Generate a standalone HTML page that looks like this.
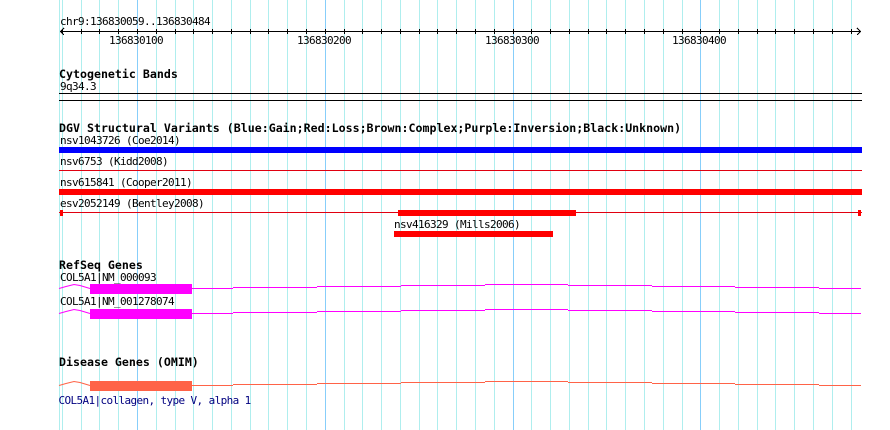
<!DOCTYPE html>
<html>
<head>
<meta charset="utf-8">
<style>
html,body{margin:0;padding:0;background:#fff;width:890px;height:430px;overflow:hidden}
svg{display:block}
text{font-family:"DejaVu Sans Mono","Liberation Mono",monospace;font-size:11px;letter-spacing:-0.62px;fill:#000;white-space:pre;text-rendering:optimizeSpeed}
.t{font-weight:bold;font-size:11.6px;letter-spacing:0.01px}
.c line,.c rect,.c polyline,.c path{shape-rendering:crispEdges}
</style>
</head>
<body>
<svg width="890" height="430" viewBox="0 0 890 430" xmlns="http://www.w3.org/2000/svg">
<g class="c">
<path fill="none" stroke="#afeeee" stroke-width="1" d="M59.5 0V430M62.5 0V430M81.5 0V430M99.5 0V430M118.5 0V430M156.5 0V430M175.5 0V430M193.5 0V430M212.5 0V430M231.5 0V430M250.5 0V430M268.5 0V430M287.5 0V430M306.5 0V430M344.5 0V430M362.5 0V430M381.5 0V430M400.5 0V430M419.5 0V430M437.5 0V430M456.5 0V430M475.5 0V430M494.5 0V430M531.5 0V430M550.5 0V430M569.5 0V430M588.5 0V430M606.5 0V430M625.5 0V430M644.5 0V430M663.5 0V430M682.5 0V430M719.5 0V430M738.5 0V430M757.5 0V430M775.5 0V430M794.5 0V430M813.5 0V430M832.5 0V430M851.5 0V430"/>
<path fill="none" stroke="#87cefa" stroke-width="1" d="M137.5 0V430M325.5 0V430M513.5 0V430M700.5 0V430"/>
<path fill="none" stroke="#000" stroke-width="1" d="M60 31.5H861M62.5 29V34M81.5 29V34M99.5 29V34M118.5 29V34M137.5 29V34M156.5 29V34M175.5 29V34M193.5 29V34M212.5 29V34M231.5 29V34M250.5 29V34M268.5 29V34M287.5 29V34M306.5 29V34M325.5 29V34M344.5 29V34M362.5 29V34M381.5 29V34M400.5 29V34M419.5 29V34M437.5 29V34M456.5 29V34M475.5 29V34M494.5 29V34M513.5 29V34M531.5 29V34M550.5 29V34M569.5 29V34M588.5 29V34M606.5 29V34M625.5 29V34M644.5 29V34M663.5 29V34M682.5 29V34M700.5 29V34M719.5 29V34M738.5 29V34M757.5 29V34M775.5 29V34M794.5 29V34M813.5 29V34M832.5 29V34M851.5 29V34"/>
<path fill="none" stroke="#000" stroke-width="1" d="M59 93.5H862M59 100.5H862"/>
<rect x="59" y="147" width="803" height="6" fill="#0000ff"/>
<rect x="59" y="170" width="803" height="1" fill="#e00010"/>
<rect x="59" y="189" width="803" height="6" fill="#ff0000"/>
<rect x="59" y="212" width="803" height="1" fill="#e00010"/>
<rect x="60" y="210" width="3" height="6" fill="#ff0000"/>
<rect x="858" y="210" width="3" height="6" fill="#ff0000"/>
<rect x="398" y="210" width="178" height="6" fill="#ff0000"/>
<rect x="394" y="231" width="159" height="6" fill="#ff0000"/>
<rect x="90" y="284" width="102" height="10" fill="#ff00ff"/>
<rect x="90" y="309" width="102" height="10" fill="#ff00ff"/>
<rect x="90" y="381" width="102" height="10" fill="#ff6347"/>
<path fill="none" stroke="#ff00ff" stroke-width="1" d="M192 288.5H233M233 287.5H317M317 286.5H401M401 285.5H485M485 284.5H568M568 285.5H652M652 286.5H735M735 287.5H819M819 288.5H861"/>
<path fill="none" stroke="#ff00ff" stroke-width="1" d="M192 313.5H233M233 312.5H317M317 311.5H401M401 310.5H485M485 309.5H568M568 310.5H652M652 311.5H735M735 312.5H819M819 313.5H861"/>
<path fill="none" stroke="#ff6347" stroke-width="1" d="M192 385.5H233M233 384.5H317M317 383.5H401M401 382.5H485M485 381.5H568M568 382.5H652M652 383.5H735M735 384.5H819M819 385.5H861"/>
</g>
<path fill="none" stroke="#000" stroke-width="1" d="M64 28L60.5 31.5L64 35M857 28L860.5 31.5L857 35" shape-rendering="crispEdges"/>
<polyline fill="none" stroke="#ff00ff" stroke-width="1" points="59,288.5 66,286.5 74,284.5 80,285.5 90,288.5"/>
<polyline fill="none" stroke="#ff00ff" stroke-width="1" points="59,313.5 66,311.5 74,309.5 80,310.5 90,313.5"/>
<polyline fill="none" stroke="#ff6347" stroke-width="1" points="59,385.5 66,383.5 74,381.5 80,382.5 90,385.5"/>
<text x="60" y="25">chr9:136830059..136830484</text>
<text x="109" y="44">136830100</text>
<text x="297" y="44">136830200</text>
<text x="485" y="44">136830300</text>
<text x="672" y="44">136830400</text>
<text class="t" x="59" y="78">Cytogenetic Bands</text>
<text x="60" y="90">9q34.3</text>
<text class="t" x="59" y="132">DGV Structural Variants (Blue:Gain;Red:Loss;Brown:Complex;Purple:Inversion;Black:Unknown)</text>
<text x="60" y="144">nsv1043726 (Coe2014)</text>
<text x="60" y="165">nsv6753 (Kidd2008)</text>
<text x="60" y="186">nsv615841 (Cooper2011)</text>
<text x="60" y="207">esv2052149 (Bentley2008)</text>
<text x="394" y="228">nsv416329 (Mills2006)</text>
<text class="t" x="59" y="269">RefSeq Genes</text>
<text x="60" y="281">COL5A1|NM_000093</text>
<text x="60" y="305">COL5A1|NM_001278074</text>
<text class="t" x="59" y="366">Disease Genes (OMIM)</text>
<text x="58.5" y="404" style="fill:#000080">COL5A1|collagen, type V, alpha 1</text>
</svg>
</body>
</html>
